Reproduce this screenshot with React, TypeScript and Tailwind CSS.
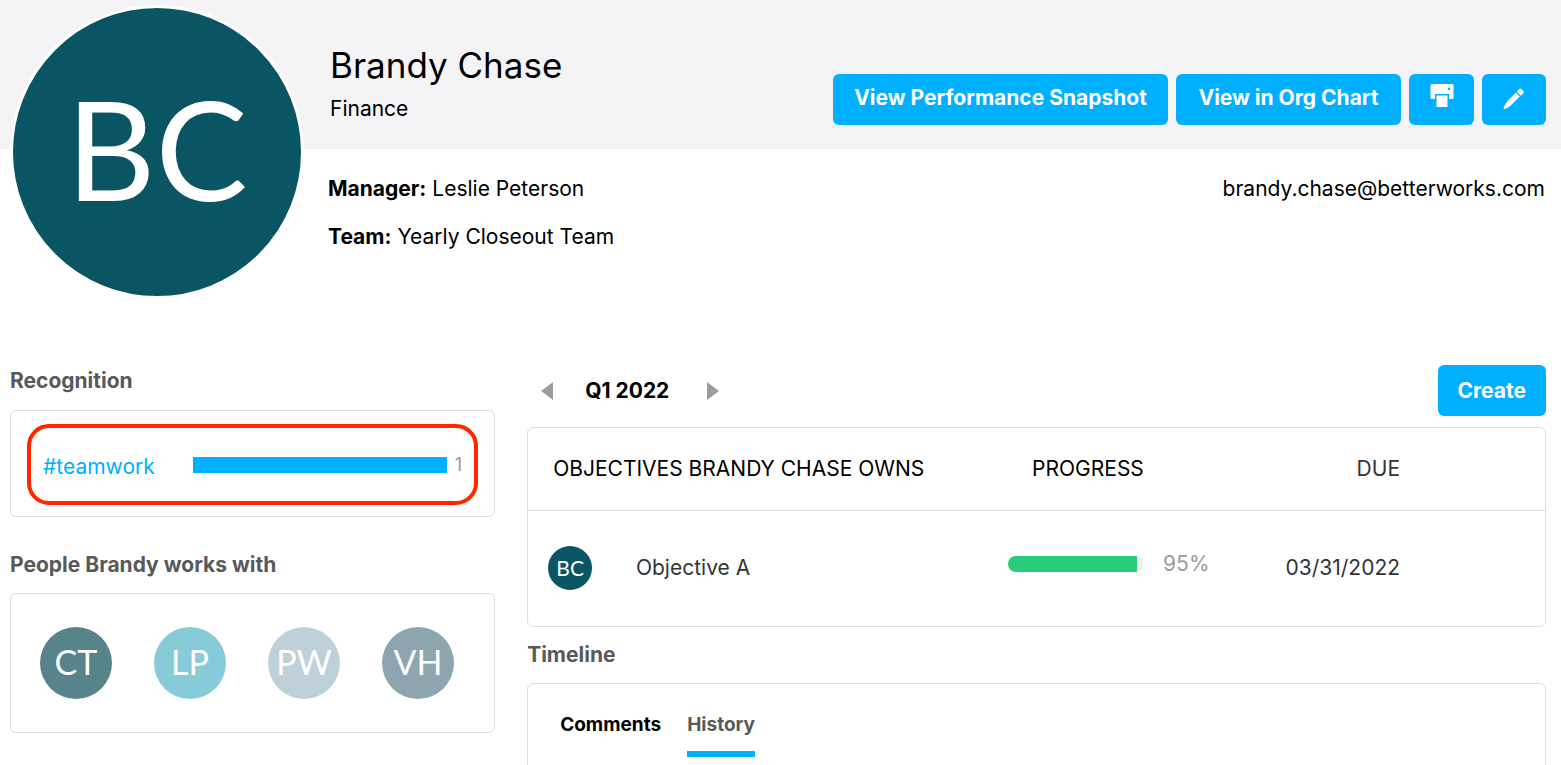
import { useState } from "react";
import clsx from "clsx";

const PEOPLE = [
  { initials: "CT", color: "bg-[#57838b]" },
  { initials: "LP", color: "bg-[#87cbd8]" },
  { initials: "PW", color: "bg-[#bfd1d8]" },
  { initials: "VH", color: "bg-[#8da5ae]" },
];

const RECOGNITIONS = [{ tag: "#teamwork", count: 1 }];

const OBJECTIVES = [{ owner: "BC", name: "Objective A", progress: 95, due: "03/31/2022" }];

const TABS = ["Comments", "History"];

const primaryButton =
  "h-[51px] rounded-md bg-[#00afff] text-[21px] leading-7 font-bold text-white hover:bg-[#009de6]";

function PrintIcon() {
  return (
    <svg width="24" height="24" viewBox="0 0 24 24" fill="currentColor" aria-hidden="true">
      <path
        fillRule="evenodd"
        d="M2 0h20a1.5 1.5 0 0 1 1.5 1.5v12A1.5 1.5 0 0 1 22 15h-3v-5H5v5H2a1.5 1.5 0 0 1-1.5-1.5v-12A1.5 1.5 0 0 1 2 0Zm17 3.5a1.3 1.3 0 1 0 0 2.6 1.3 1.3 0 0 0 0-2.6Z"
      />
      <path d="M6.500 11.5h11v11.5h-11z" />
    </svg>
  );
}

function PencilIcon() {
  return (
    <svg width="22" height="22" viewBox="0 0 22 22" fill="currentColor" aria-hidden="true">
      <path d="m12.800 4.500 4 4L8.200 17c-2.100 2-4.300 3.500-7 4.200-.5.100-.8-.1-.6-.6.700-2.700 2-5.200 4-7.600z" />
      <path d="m14.200 3.100 2-2c.7-.7 1.500-.7 2.200 0l2 2c.7.7.7 1.500 0 2.200l-2 2c-.3.300-.7.300-1 0l-3.200-3.200c-.3-.3-.3-.7 0-1z" />
    </svg>
  );
}

export default function ProfilePage() {
  const [activeTab, setActiveTab] = useState("History");

  return (
    <div className="min-h-screen overflow-hidden bg-white font-[Inter,sans-serif] text-[21px] leading-7 text-black">
      <header className="grid grid-cols-[auto_1fr_auto] grid-rows-[149px_auto]">
        <div className="col-span-full row-start-1 bg-[#f4f4f7]" />
        <div className="col-start-1 row-span-2 row-start-1 mt-[5px] ml-2.5 flex size-[294px] items-center justify-center rounded-full border-3 border-white bg-[#0a5563] pb-2 font-[Lato,sans-serif] text-[138px] leading-none text-white">
          BC
        </div>
        <div className="col-start-2 row-start-1 pt-[43px] pl-[26px]">
          <h1 className="text-[35px] leading-11">Brandy Chase</h1>
          <p className="mt-2">Finance</p>
        </div>
        <div className="col-start-3 row-start-1 mt-[74px] mr-[15px] flex gap-2 self-start">
          <button className={clsx(primaryButton, "min-w-[335px] px-5 pb-1")}>View Performance Snapshot</button>
          <button className={clsx(primaryButton, "min-w-[225px] px-5 pb-1")}>View in Org Chart</button>
          <button aria-label="Print" className={clsx(primaryButton, "flex w-[65px] justify-center pt-2.5")}>
            <PrintIcon />
          </button>
          <button aria-label="Edit" className={clsx(primaryButton, "flex w-16 items-center justify-center pb-0.5")}>
            <PencilIcon />
          </button>
        </div>
        <div className="col-start-2 row-start-2 space-y-5 pt-[26px] pl-6">
          <p>
            <strong className="font-bold">Manager:</strong> Leslie Peterson
          </p>
          <p>
            <strong className="font-bold">Team:</strong> Yearly Closeout Team
          </p>
        </div>
        <p className="col-start-3 row-start-2 pt-[26px] pr-4 text-right">brandy.chase@betterworks.com</p>
      </header>

      <main className="mt-[66px] grid grid-cols-[minmax(0,10fr)_minmax(0,21fr)] gap-8 pr-[15px] pl-2.5">
        <aside>
          <h2 className="mt-0.5 font-bold text-[#58595b]">Recognition</h2>
          <div className="mt-[15px] rounded-md border border-[#dcdce2] px-4 pt-[13px] pb-[11px]">
            {RECOGNITIONS.map((r) => (
              <div
                key={r.tag}
                className="flex h-[81px] items-center rounded-[22px] border-4 border-[#ff2600] px-3"
              >
                <a href="#teamwork" className="w-[150px] pt-1 text-[#00afff]">
                  {r.tag}
                </a>
                <div className="h-4 flex-1 bg-[#00afff]" />
                <span className="ml-2 text-lg text-[#999a9c]">{r.count}</span>
              </div>
            ))}
          </div>

          <h2 className="mt-[34px] font-bold text-[#58595b]">People Brandy works with</h2>
          <div className="mt-[14px] flex gap-[42px] rounded-md border border-[#dcdce2] px-[29px] py-[33px]">
            {PEOPLE.map((p) => (
              <div
                key={p.initials}
                className={clsx(
                  "flex size-[72px] items-center justify-center rounded-full pb-0.5 font-[Lato,sans-serif] text-[34px] leading-none text-white",
                  p.color,
                )}
              >
                {p.initials}
              </div>
            ))}
          </div>
        </aside>

        <section>
          <div className="flex items-center justify-between">
            <div className="flex items-center pl-3.5">
              <button aria-label="Previous quarter" className="text-[#9b9ba0]">
                <svg width="12" height="18" viewBox="0 0 12 18" fill="currentColor">
                  <path d="M12 0v18L0 9z" />
                </svg>
              </button>
              <span className="mr-[38px] ml-8 font-bold">Q1 2022</span>
              <button aria-label="Next quarter" className="text-[#9b9ba0]">
                <svg width="12" height="18" viewBox="0 0 12 18" fill="currentColor">
                  <path d="M0 0v18l12-9z" />
                </svg>
              </button>
            </div>
            <button className={clsx(primaryButton, "px-5")}>Create</button>
          </div>

          <div className="mt-[11px] rounded-md border border-[#dcdce2]">
            <table className="w-full table-fixed text-left">
              <colgroup>
                <col className="w-[10.6%]" />
                <col className="w-[36.6%]" />
                <col className="w-[23%]" />
                <col />
              </colgroup>
              <thead>
                <tr className="h-[82px] border-b border-[#dcdce2]">
                  <th colSpan={2} className="pl-[25px] font-normal">
                    OBJECTIVES BRANDY CHASE OWNS
                  </th>
                  <th className="pl-6 font-normal">PROGRESS</th>
                  <th className="pr-[145px] text-right font-normal text-[#323338]">DUE</th>
                </tr>
              </thead>
              <tbody>
                {OBJECTIVES.map((o) => (
                  <tr key={o.name} className="h-[116px] text-[#323338]">
                    <td className="pl-5">
                      <div className="flex size-11 items-center justify-center rounded-full bg-[#0a5563] pb-0.5 font-[Lato,sans-serif] leading-none text-white">
                        {o.owner}
                      </div>
                    </td>
                    <td>{o.name}</td>
                    <td className="pb-2">
                      <div className="flex items-center gap-[19px]">
                        <div className="h-4 w-[136px] overflow-hidden rounded-full bg-[#f0f0f0]">
                          <div className="h-full bg-[#29cc7a]" style={{ width: `${o.progress}%` }} />
                        </div>
                        <span className="text-[#999a9c]">{o.progress}%</span>
                      </div>
                    </td>
                    <td className="pr-[145px] text-right">{o.due}</td>
                  </tr>
                ))}
              </tbody>
            </table>
          </div>

          <h2 className="mt-[14px] font-bold text-[#58595b]">Timeline</h2>
          <div className="mt-[14px] flex gap-[26px] rounded-md border border-[#dcdce2] px-8 pt-6 pb-16">
            {TABS.map((tab) => (
              <button
                key={tab}
                onClick={() => setActiveTab(tab)}
                className={clsx(
                  "border-b-6 pt-[3px] pb-3 text-[19px] leading-7 font-bold",
                  tab === activeTab ? "border-[#00afff] text-[#58595b]" : "border-transparent text-black",
                )}
              >
                {tab}
              </button>
            ))}
          </div>
        </section>
      </main>
    </div>
  );
}
